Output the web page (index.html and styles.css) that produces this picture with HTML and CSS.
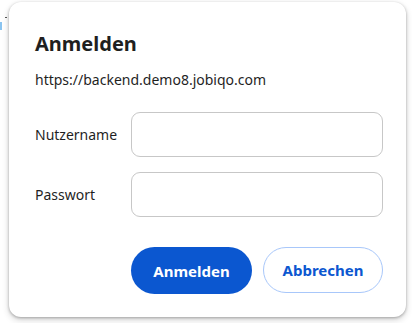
FILE: index.html
```html
<!DOCTYPE html>
<html lang="de">
<head>
<meta charset="utf-8">
<link rel="stylesheet" href="styles.css">
</head>
<body>
<div class="backdrop-mark"></div>
<div class="backdrop-dot"></div>
<div class="dialog">
  <h1 class="title">Anmelden</h1>
  <div class="origin">https://backend.demo8.jobiqo.com</div>
  <div class="form">
    <label class="label" for="u">Nutzername</label>
    <input class="field" id="u" type="text">
    <label class="label" for="p">Passwort</label>
    <input class="field" id="p" type="password">
  </div>
  <div class="actions">
    <button class="btn primary">Anmelden</button>
    <button class="btn secondary">Abbrechen</button>
  </div>
</div>
</body>
</html>
```
FILE: styles.css
```css
html, body {
  margin: 0;
  padding: 0;
  background: #ffffff;
  width: 412px;
  height: 323px;
  overflow: hidden;
  font-family: "Noto Sans", "Open Sans", sans-serif;
  color: #1f1f1f;
}
body {
  padding: 2px 0 0 9px;
  box-sizing: border-box;
  position: relative;
}
.backdrop-mark {
  position: absolute;
  left: 0;
  top: 22px;
  width: 2px;
  height: 8px;
  background: #8ac4f0;
}
.backdrop-dot {
  position: absolute;
  left: 5px;
  top: 17px;
  width: 2px;
  height: 1px;
  background: #555;
}
.dialog {
  position: relative;
  width: 397px;
  height: 315px;
  box-sizing: border-box;
  background: #fff;
  border-radius: 12px;
  box-shadow: 0 1px 3px rgba(0,0,0,0.3), 0 3px 6px 1px rgba(0,0,0,0.12);
  padding: 28px 23px 0 26px;
}
.title {
  margin: 0;
  font-size: 20px;
  font-weight: 700;
  line-height: 28px;
  color: #1f1f1f;
}
.origin {
  margin-top: 12px;
  font-size: 14px;
  line-height: 20px;
}
.form {
  margin-top: 22px;
  display: grid;
  grid-template-columns: 96px 252px;
  row-gap: 15px;
  align-items: center;
}
.label {
  font-size: 14px;
}
.field {
  height: 45px;
  box-sizing: border-box;
  border: 1px solid #c7c7c7;
  border-radius: 9px;
  margin: 0;
  padding: 0 12px;
  font: inherit;
}
.actions {
  margin-top: 30px;
  display: flex;
  justify-content: flex-end;
  gap: 11px;
}
.btn {
  height: 47px;
  width: 121px;
  border-radius: 24px;
  font-family: inherit;
  font-size: 15px;
  font-weight: 700;
  margin: 0;
  padding: 0;
}
.primary {
  background: #0b57d0;
  color: #fff;
  border: none;
}
.secondary {
  background: #fff;
  color: #0b57d0;
  border: 1px solid #a8c7fa;
  width: 120px;
  height: 46px;
}
```
